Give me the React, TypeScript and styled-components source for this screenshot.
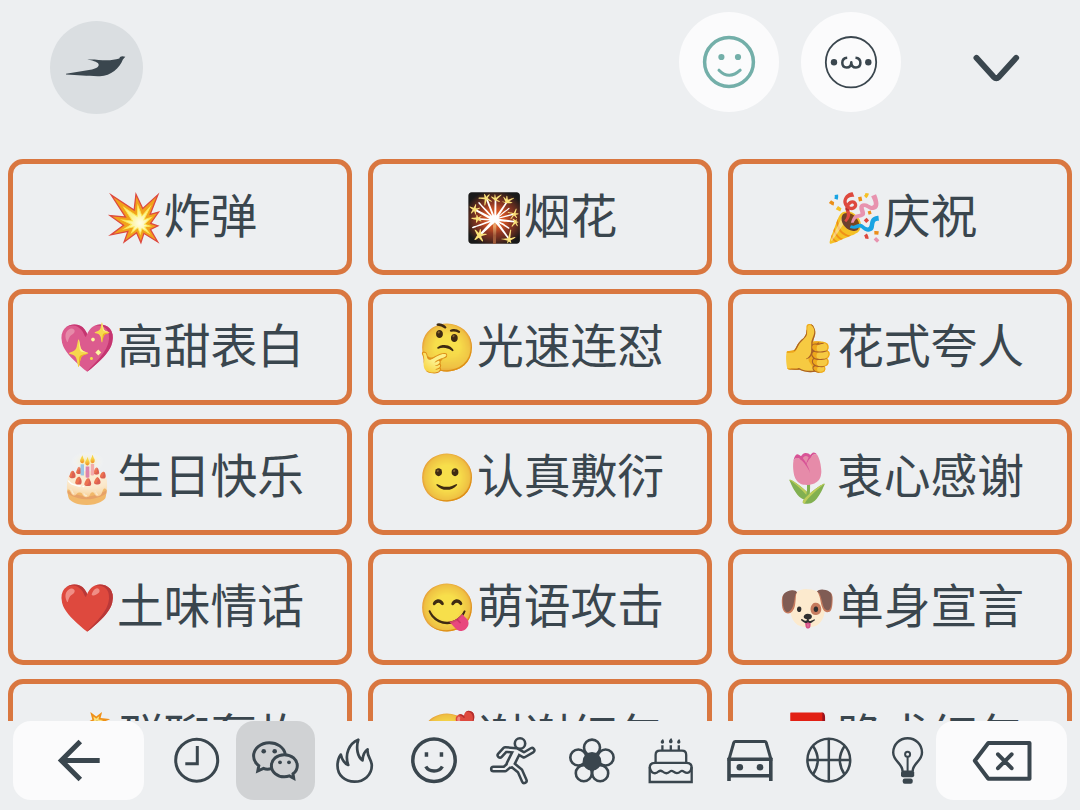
import React from "react";
import styled, { createGlobalStyle } from "styled-components";

const ink = "#3a464e";
const surface = "#edeff1";
const key = "#fbfbfc";

const GlobalStyle = createGlobalStyle`
  * { box-sizing: border-box; }
  body { margin: 0; background: ${surface}; }
  button { border: 0; padding: 0; margin: 0; font: inherit; color: inherit; background: none; }
`;

const Keyboard = styled.main`
  width: 1080px;
  height: 810px;
  display: flex;
  flex-direction: column;
  overflow: hidden;
  background: ${surface};
  color: ${ink};
  font-family: "Noto Sans CJK SC", "Noto Color Emoji", sans-serif;
`;

const Header = styled.header`
  flex: none;
  height: 159px;
  display: flex;
  align-items: flex-start;
  padding: 12px 49px 0 50px;
`;

const RoundButton = styled.button<{ $size: number; $fill: string }>`
  flex: none;
  width: ${(p) => p.$size}px;
  height: ${(p) => p.$size}px;
  border-radius: 50%;
  background: ${(p) => p.$fill};
`;

const LogoButton = styled(RoundButton)`
  margin: 9px auto 0 0;
`;

const ModeButtons = styled.div`
  display: flex;
  gap: 22px;
`;

const CollapseButton = styled.button`
  width: 70px;
  height: 100px;
  margin-left: 60px;
`;

const Phrases = styled.section`
  flex: none;
  height: 562px;
  padding: 0 8px;
  overflow: hidden;
  display: grid;
  grid-template-columns: repeat(3, 344px);
  grid-auto-rows: 116px;
  gap: 14px 16px;
`;

const Phrase = styled.button`
  display: flex;
  align-items: center;
  justify-content: center;
  border: 5px solid #d97740;
  border-radius: 15px;
  font-size: 46.8px;
  line-height: 60px;
  white-space: nowrap;
  padding: 0 0 8px 2px;
`;

const Emoji = styled.span`
  width: 59px;
  padding-top: 9px;
  font-family: "Noto Color Emoji", sans-serif;
  filter: saturate(0.84);
`;

const BottomBar = styled.footer`
  flex: none;
  height: 79px;
  display: flex;
  padding: 0 13px;
`;

const WideKey = styled.button`
  flex: none;
  width: 131px;
  height: 79px;
  border-radius: 18px;
  background: ${key};
`;

const Categories = styled.nav`
  width: 792px;
  padding-left: 13px;
  display: flex;
  overflow: hidden;
`;

const Category = styled.button<{ $active?: boolean }>`
  flex: none;
  width: 79px;
  height: 79px;
  border-radius: 18px;
  background: ${(p) => (p.$active ? "#d0d2d4" : "transparent")};
`;

const Drawing = styled.svg`
  display: block;
  fill: none;
  stroke: currentColor;
  stroke-width: 3px;
  .solid { fill: currentColor; stroke: none; }
`;

const phrases: [string, string][] = [
  ["💥", "炸弹"], ["🎇", "烟花"], ["🎉", "庆祝"],
  ["💖", "高甜表白"], ["🤔", "光速连怼"], ["👍", "花式夸人"],
  ["🎂", "生日快乐"], ["🙂", "认真敷衍"], ["🌷", "衷心感谢"],
  ["❤️", "土味情话"], ["😋", "萌语攻击"], ["🐶", "单身宣言"],
  ["💣", "群聊轰炸"], ["🥰", "谢谢红包"], ["🧧", "跪求红包"],
];

const limbs = (
  <>
    <path d="M27 34.3 L32.3 28.5 L43 29.5 L51 34 L59 29.3" />
    <path d="M37.5 43 L32 47.8 L20.5 48" />
    <path d="M38.5 43 L47 50 L51.3 59.7" />
  </>
);

const categories: { name: string; art: React.ReactNode }[] = [
  {
    name: "recent",
    art: (
      <>
        <circle cx="39.7" cy="39.2" r="21" />
        <path d="M40.3 25 V42.7 H28.3" />
      </>
    ),
  },
  {
    name: "phrases",
    art: (
      <>
        <path d="M35.5 47.5 C32.5 48.4 29.5 48.2 27.5 47.4 L21.8 50 L22.8 44.7 C19.6 42.3 17.6 38.9 17.6 35 C17.6 27.8 24.6 21.7 33.3 21.7 C41.2 21.7 47.8 26.4 49.3 33" />
        <path d="M48.3 33.7 C40.9 33.7 35.4 38.7 35.4 44.7 C35.4 50.8 41 55.8 48.3 55.8 C50.2 55.8 51.9 55.5 53.4 54.9 L57.7 57.3 L57 52.8 C59.7 50.8 61.3 48 61.3 44.7 C61.3 38.7 55.7 33.7 48.3 33.7 Z" />
        <g className="solid">
          <circle cx="27.7" cy="30.2" r="2.3" />
          <circle cx="38.7" cy="30.2" r="2.3" />
          <circle cx="44" cy="41.3" r="1.9" />
          <circle cx="53" cy="41.3" r="1.9" />
        </g>
      </>
    ),
  },
  {
    name: "hot",
    art: (
      <path
        strokeLinejoin="round"
        strokeWidth="2.7"
        d="M43.3 18.7 C34 22.5 29.5 33 33.2 44 C29.5 42.5 27 38.5 25.8 33.5 C23.5 36.5 22.5 40.5 22.5 44.5 C22.5 54.5 30 60.7 39.5 60.7 C49 60.7 56.8 54 56.8 44.5 C56.8 38.5 51.5 35 52.6 28.3 C49.2 30.5 47.8 34.5 47.5 39.3 C42.5 36 40.8 27 43.3 18.7 Z"
      />
    ),
  },
  {
    name: "faces",
    art: (
      <>
        <circle cx="40" cy="39.2" r="21.2" strokeWidth="3.5" />
        <path d="M31.8 45.5 C35 51.5 45 51.5 48.4 45.5" strokeWidth="3.4" />
        <path className="solid" d="M30.7 31.3h3.5v4.5h-3.5z M45.7 31.3h3.5v4.5h-3.5z" />
      </>
    ),
  },
  {
    name: "people",
    art: (
      <>
        <g strokeLinecap="round" strokeLinejoin="round" strokeWidth="7.2">
          {limbs}
          <path d="M43 32 L37.5 43" strokeWidth="10" />
        </g>
        <g stroke={surface} strokeLinecap="round" strokeLinejoin="round" strokeWidth="2.2">
          {limbs}
          <path d="M43 32 L37.5 43" strokeWidth="5" />
        </g>
        <circle cx="47" cy="22.5" r="5.2" fill={surface} strokeWidth="2.6" />
      </>
    ),
  },
  {
    name: "nature",
    art: (
      <>
        <g strokeWidth="2.6">
          <circle cx="40" cy="26.6" r="8" />
          <circle cx="26.3" cy="36.5" r="8" />
          <circle cx="53.6" cy="36.5" r="8" />
          <circle cx="31.8" cy="52.2" r="8" />
          <circle cx="48.2" cy="52.2" r="8" />
        </g>
        <circle className="solid" cx="40" cy="40.3" r="9.3" />
      </>
    ),
  },
  {
    name: "food",
    art: (
      <g strokeWidth="2.3">
        <path d="M24.6 41.5 V34 Q24.6 29.7 29 29.7 H51 Q55.2 29.7 55.2 34 V41.5" />
        <path d="M18.7 61 V47 Q18.7 41.8 24 41.8 H55.5 Q60.7 41.8 60.7 47 V61 Z" />
        <path d="M18.7 46 C20 53 24.5 53.5 27.5 50.5 Q29.5 49 31.5 50.5 Q35.5 54 39 50.5 Q40.5 49.2 42.5 50.7 Q46 53.7 49.5 50.5 Q51 49.2 53 50.7 C57 53.5 60 51 60.7 46" />
        <path d="M31.4 24.3 V29 M39.8 24.3 V29 M47.8 24.3 V29" />
        <path className="solid" d="M32 18 C29 20 29.3 22.7 31.4 22.7 C33.7 22.7 33.5 20.5 32 18 Z M40.2 17 C37 19.5 37.5 22.3 39.8 22.3 C42.3 22.3 42 19.5 40.2 17 Z M48.3 18 C45.5 20 45.6 22.7 47.8 22.7 C50 22.7 49.8 20.5 48.3 18 Z" />
      </g>
    ),
  },
  {
    name: "travel",
    art: (
      <>
        <path d="M19 38.3 L23.8 21.5 Q24.2 20.5 25.4 20.5 H54.6 Q55.8 20.5 56.2 21.5 L61 38.3" />
        <path d="M17.6 38.3 H62.4 M19 54.7 H61" strokeWidth="3.4" />
        <path d="M19 37 V60 M60.8 37 V60" strokeWidth="3.6" />
        <circle className="solid" cx="29.8" cy="46.2" r="3.3" />
        <circle className="solid" cx="50" cy="46.2" r="3.3" />
      </>
    ),
  },
  {
    name: "sports",
    art: (
      <g strokeWidth="2.5">
        <circle cx="39.8" cy="39.1" r="21.4" />
        <path d="M39.8 17.7 V60.5 M18.4 39.1 H61.2 M24 25 Q33.5 39 24 53.5 M55.6 25 Q46.1 39 55.6 53.5" />
      </g>
    ),
  },
  {
    name: "objects",
    art: (
      <>
        <path
          strokeWidth="2.4"
          d="M34.5 50 C34.5 42 25.2 40.5 25.2 31.5 C25.2 23.5 31.5 17.2 39.6 17.2 C47.7 17.2 54 23.5 54 31.5 C54 40.5 44.7 42 44.7 50"
        />
        <circle cx="39.6" cy="33.2" r="2.5" strokeWidth="2" />
        <path d="M39.6 36 V50" strokeWidth="2" />
        <rect className="solid" x="33" y="49.5" width="13.2" height="6.8" rx="2" />
        <rect className="solid" x="34.7" y="57.5" width="10" height="5.2" rx="2" />
      </>
    ),
  },
];

export default function App() {
  return (
    <>
      <GlobalStyle />
      <Keyboard>
        <Header>
          <LogoButton $size={93} $fill="#dadee1">
            <Drawing width="93" height="93" viewBox="0 0 93 93">
              <path
                className="solid"
                d="M16 52.8 L42 48.4 C51 46.8 52.5 40.5 37.3 38.8 C45 37.6 58 41.4 69.3 37.6 C70 34.6 73 34.8 75.3 35.8 L72.9 38.6 C69.5 47.5 61 55 50 55.2 C38 55.4 29 54 16 53.6 Z"
              />
            </Drawing>
          </LogoButton>
          <ModeButtons>
            <RoundButton $size={100} $fill={key}>
              <Drawing width="100" height="100" viewBox="0 0 100 100" color="#73afa9">
                <circle cx="50" cy="50" r="24.4" strokeWidth="3.5" />
                <circle className="solid" cx="42.4" cy="45" r="3.1" />
                <circle className="solid" cx="59" cy="45" r="3.1" />
                <path d="M40 58.2 Q50 68.3 61.2 58.2" strokeLinecap="round" />
              </Drawing>
            </RoundButton>
            <RoundButton $size={100} $fill={key}>
              <Drawing width="100" height="100" viewBox="0 0 100 100">
                <circle cx="50" cy="50.2" r="25.2" strokeWidth="1.8" />
                <circle className="solid" cx="33" cy="50.3" r="3.2" />
                <circle className="solid" cx="67.3" cy="50.3" r="3.2" />
                <path
                  strokeWidth="2.5"
                  strokeLinejoin="round"
                  d="M46.2 45.7 C42.8 46 41.3 48.2 41.3 50.8 C41.3 53.7 43 55.5 45.6 55.5 C48.5 55.5 50.3 53.8 50.3 50.2 C50.3 53.8 52.2 55.5 55 55.5 C57.7 55.5 59.4 53.7 59.4 50.8 C59.4 48.2 57.9 46 54.5 45.7"
                />
              </Drawing>
            </RoundButton>
          </ModeButtons>
          <CollapseButton>
            <Drawing width="70" height="100" viewBox="0 0 70 100">
              <path
                strokeWidth="5.8"
                strokeLinecap="round"
                strokeLinejoin="round"
                d="M15.4 45.8 L32.6 64.8 Q35.3 67.4 38 64.8 L55.2 45.8"
              />
            </Drawing>
          </CollapseButton>
        </Header>

        <Phrases>
          {phrases.map(([emoji, label]) => (
            <Phrase key={label}>
              <Emoji>{emoji}</Emoji>
              {label}
            </Phrase>
          ))}
        </Phrases>

        <BottomBar>
          <WideKey>
            <Drawing width="131" height="79" viewBox="0 0 131 79">
              <path strokeWidth="5" d="M86.7 39.5 H48 M67.3 20.5 L48.3 39.5 L67.3 58.5" />
            </Drawing>
          </WideKey>
          <Categories>
            {categories.map(({ name, art }) => (
              <Category key={name} $active={name === "phrases"}>
                <Drawing width="79" height="79" viewBox="0 0 79 79">
                  {art}
                </Drawing>
              </Category>
            ))}
          </Categories>
          <WideKey>
            <Drawing width="131" height="79" viewBox="0 0 131 79">
              <path
                strokeWidth="4"
                strokeLinejoin="round"
                d="M38.8 39.8 L52.3 22 H93.5 V57.8 H52.3 Z"
              />
              <path strokeWidth="4" strokeLinecap="round" d="M62 33.3 L75.6 47.2 M75.6 33.3 L62 47.2" />
            </Drawing>
          </WideKey>
        </BottomBar>
      </Keyboard>
    </>
  );
}
